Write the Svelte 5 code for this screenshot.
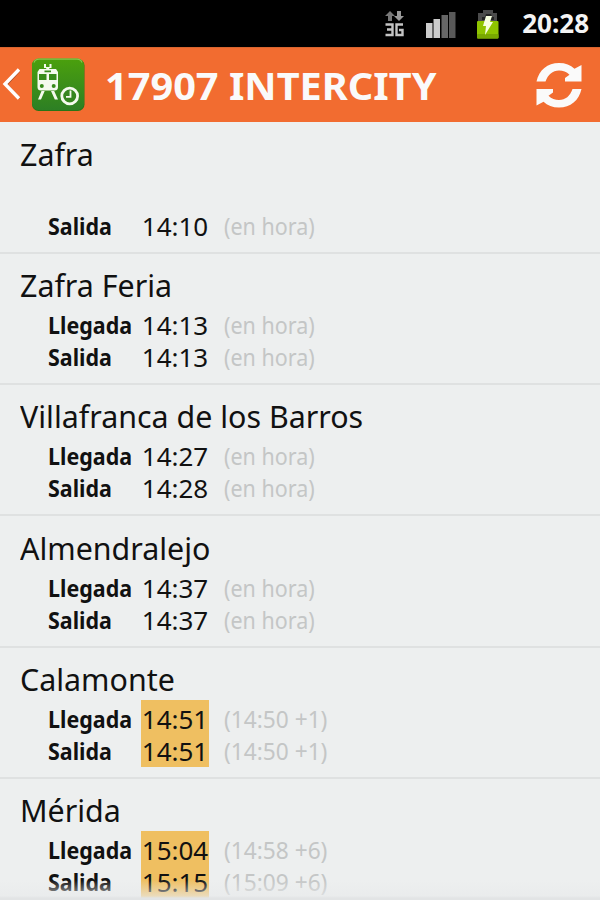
<script lang="ts">
  interface Call {
    label: string;
    time: string;
    note: string;
    late?: boolean;
  }
  interface Stop {
    name: string;
    calls: Call[];
  }

  const train = '17907 INTERCITY';
  const clock = '20:28';

  const stops: Stop[] = [
    { name: 'Zafra', calls: [{ label: 'Salida', time: '14:10', note: '(en hora)' }] },
    {
      name: 'Zafra Feria',
      calls: [
        { label: 'Llegada', time: '14:13', note: '(en hora)' },
        { label: 'Salida', time: '14:13', note: '(en hora)' },
      ],
    },
    {
      name: 'Villafranca de los Barros',
      calls: [
        { label: 'Llegada', time: '14:27', note: '(en hora)' },
        { label: 'Salida', time: '14:28', note: '(en hora)' },
      ],
    },
    {
      name: 'Almendralejo',
      calls: [
        { label: 'Llegada', time: '14:37', note: '(en hora)' },
        { label: 'Salida', time: '14:37', note: '(en hora)' },
      ],
    },
    {
      name: 'Calamonte',
      calls: [
        { label: 'Llegada', time: '14:51', note: '(14:50 +1)', late: true },
        { label: 'Salida', time: '14:51', note: '(14:50 +1)', late: true },
      ],
    },
    {
      name: 'Mérida',
      calls: [
        { label: 'Llegada', time: '15:04', note: '(14:58 +6)', late: true },
        { label: 'Salida', time: '15:15', note: '(15:09 +6)', late: true },
      ],
    },
  ];
</script>

<div class="screen">
  <div class="status">
    <svg class="network" width="22" height="30" viewBox="0 0 22 30" aria-hidden="true">
      <path d="M6 1l5 5H8v5H4V6H1z" fill="#777" />
      <path d="M15 11l-5-5h3V1h4v5h3z" fill="#999" />
      <path
        d="M1.500 14.500h7v10.500h-7M3 19.500h5.500M19 14.500h-6.500v10.500H18.500v-5h-3.500"
        fill="none"
        stroke="#c4c4c4"
        stroke-width="2.400"
      />
    </svg>
    <svg class="signal" width="30" height="28" viewBox="0 0 30 28" aria-hidden="true">
      <rect x="0" y="12" width="6.500" height="15" fill="#ccc" />
      <rect x="7.500" y="8" width="6.500" height="19" fill="#ccc" />
      <rect x="15.500" y="4" width="6.500" height="23" fill="#666" />
      <rect x="23" y="1" width="6.500" height="26" fill="#595959" />
    </svg>
    <svg class="battery" width="24" height="31" viewBox="0 0 24 31" aria-hidden="true">
      <path d="M7 4V1h10v3h4v8H2V4z" fill="#4b4b4b" />
      <path d="M6 11V8h3l1-3h5l1 3h2v3z" fill="#222" />
      <rect x="1" y="12" width="21.500" height="17.500" rx="1" fill="#8fc400" />
      <rect x="1" y="25" width="21.500" height="4.500" rx="1" fill="#79a800" />
      <path d="M10 7h6l-2 6h3L9 26l1-9H7z" fill="#f7ffe0" />
    </svg>
    <span class="clock">{clock}</span>
  </div>

  <header>
    <svg class="back" width="20" height="36" viewBox="0 0 20 36" aria-hidden="true">
      <path d="M19.500 3.500L6.500 17.500l13 14" fill="none" stroke="#a64c27" stroke-width="2.500" />
      <path d="M19 2.500L5 17l14 14.500" fill="none" stroke="#fff" stroke-width="3.400" />
    </svg>
    <svg class="logo" width="54" height="54" viewBox="0 0 54 54" aria-hidden="true">
      <defs>
        <linearGradient id="green" x1="0" y1="0" x2="0" y2="1">
          <stop offset="0" stop-color="#4ba00d" />
          <stop offset="1" stop-color="#2d7f24" />
        </linearGradient>
      </defs>
      <rect x="1" y="1" width="52.500" height="52" rx="6.500" fill="#287416" />
      <rect x="1" y="0.500" width="52" height="51.500" rx="6.500" fill="url(#green)" />
      <path d="M3 4.500q1-3 5-3.300h38q4 .3 5 3.300" fill="none" stroke="#86c34c" stroke-width="1.200" />
      <g fill="#f5faee">
        <path d="M13 6h2v3h3.500V6h2v4h-2.200v1.500h-3.100V10H13z" />
        <path d="M8.500 11h16.500l2 3v15q0 3.500-3.500 3.500h-13.500q-3.500 0-3.500-3.500V14z" />
        <path d="M10.500 33h3.200L10 41.500H7zM20 33h3.200l3.800 8.500h-3.200z" />
      </g>
      <path d="M8 16h7.500v6H8zM18 16h7.500v6H18zM13.500 12.500h6.500v1.700h-6.500z" fill="#388b1a" />
      <circle cx="10.800" cy="28" r="2" fill="#388b1a" />
      <circle cx="22.700" cy="28" r="2" fill="#388b1a" />
      <circle cx="38.700" cy="38" r="7.900" fill="#36861f" stroke="#f5faee" stroke-width="2.800" />
      <path d="M39.500 32.500v6.300h-4.500" fill="none" stroke="#f5faee" stroke-width="1.800" />
    </svg>
    <h1><span>{train}</span></h1>
    <svg class="refresh" width="46" height="46" viewBox="0 0 46 46" aria-hidden="true">
      <g fill="#fafafa">
        <path d="M.5 19.500C3 8 11.500 1 23 1c6.500 0 11.500 2 15.500 5.800L45.500 3v16.500H29v-3.500l4.500-3.200C30.500 9.800 27 8.500 23 8.500c-6.500 0-11 4-13.500 11z" />
        <path d="M45.500 27C43 38.500 34.500 45.500 23 45.500c-6.500 0-11.500-2-15.500-5.800L.5 43.500V27H17v3.500l-4.500 3.200c3 3 6.500 4.300 10.500 4.300 6.500 0 11-4 13.500-11z" />
      </g>
    </svg>
  </header>

  <main>
    {#each stops as stop (stop.name)}
      <section>
        <h2><span>{stop.name}</span></h2>
        <div class="calls">
          {#each stop.calls as call (call.label)}
            <div class="call">
              <span class="label"><b>{call.label}</b></span>
              <span class="time" class:late={call.late}>{call.time}</span>
              <span class="note" class:delay={call.late}><i>{call.note}</i></span>
            </div>
          {/each}
        </div>
      </section>
    {/each}
  </main>
  <div class="fade"></div>
</div>

<style>
  :global(body) {
    background: #edefef;
  }

  .screen {
    position: relative;
    display: flex;
    flex-direction: column;
    height: 900px;
    overflow: hidden;
    font-family: 'Noto Sans', 'Open Sans', sans-serif;
    color: #111;
    background: #edefef;
  }

  svg {
    flex: none;
    display: block;
  }

  .status {
    flex: none;
    display: flex;
    align-items: flex-start;
    height: 47px;
    box-sizing: border-box;
    padding: 10px 11px 0 0;
    justify-content: flex-end;
    background: #000;
  }

  .network {
    margin-right: 20px;
  }

  .signal {
    margin: 1px 20px 0 0;
  }

  .battery {
    margin: -1px 22px 0 0;
  }

  .clock {
    font-size: 26px;
    line-height: 26px;
    font-weight: 700;
    color: #f4f4f4;
  }

  header {
    flex: none;
    display: flex;
    align-items: center;
    height: 75px;
    box-sizing: border-box;
    padding-right: 18px;
    background: #f26c30;
    border-top: 1px solid #d9652f;
  }

  .logo {
    margin-left: 11px;
  }

  h1 {
    flex: 1;
    margin: 0 0 0 20px;
    font-size: 38px;
    line-height: 74px;
    font-weight: 700;
    color: #fafafa;
    white-space: nowrap;
  }

  h1 span,
  h2 span,
  .label b,
  .note i {
    display: inline-block;
    transform-origin: 0 50%;
  }

  h1 span {
    transform: scaleX(1.045);
  }

  main {
    flex: 1;
    min-height: 0;
    overflow: hidden;
    padding-top: 0.7px;
  }

  section {
    display: flex;
    flex-direction: column;
    height: 131.25px;
    box-sizing: border-box;
    padding: 10.3px 0 10px 20px;
    border-bottom: 2px solid #dfe1e1;
  }

  h2 {
    margin: 0;
    font-size: 31px;
    line-height: 42px;
    font-weight: 400;
    white-space: nowrap;
  }

  h2 span {
    transform: scaleX(0.98);
  }

  /* A lone departure keeps the lower line, as if the arrival were blank. */
  .calls {
    flex: 1;
    display: flex;
    flex-direction: column;
    justify-content: flex-end;
    padding-left: 28px;
  }

  .call {
    display: grid;
    grid-template-columns: 93px 68px auto;
    height: 32px;
    line-height: 32px;
    white-space: nowrap;
  }

  .label {
    width: 84px;
    font-size: 24px;
  }

  .label b {
    transform: scaleX(0.895);
  }

  .time {
    font-size: 26px;
    text-align: center;
  }

  .time.late {
    background: #efbf61;
    box-shadow: 0 -3px #efbf61;
  }

  .note {
    padding-left: 15px;
    font-size: 24px;
    color: #c4c6c6;
  }

  .note i {
    font-style: normal;
    transform: scaleX(0.895);
  }

  .note.delay i {
    transform: scaleX(0.945);
  }

  .fade {
    position: absolute;
    left: 0;
    right: 0;
    bottom: 0;
    height: 20px;
    background: linear-gradient(rgba(237, 239, 239, 0), rgba(232, 234, 235, 0.65) 80%, #e2e4e5 90%);
  }
</style>
